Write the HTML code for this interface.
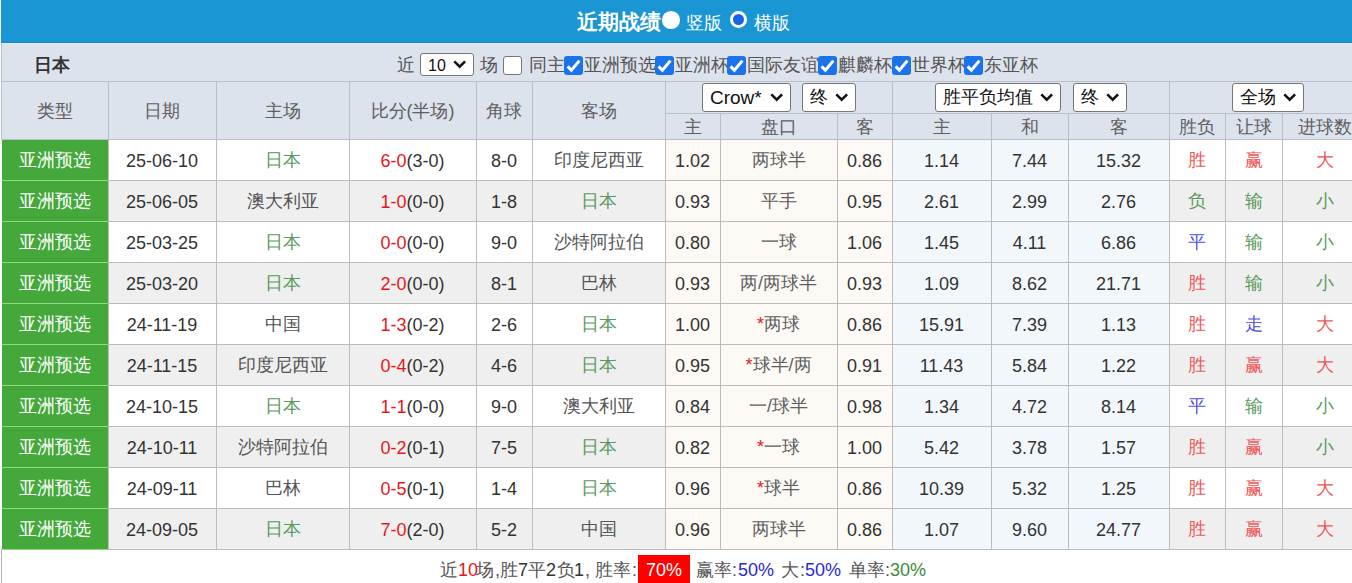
<!DOCTYPE html>
<html><head><meta charset="utf-8"><style>
html,body{margin:0;padding:0;background:#fff;width:1352px;height:583px;overflow:hidden;position:relative;font-family:"Liberation Sans",sans-serif;}
.b{position:absolute;box-sizing:content-box}
.t{position:absolute;text-align:center;font-size:18px;color:#333;white-space:nowrap;overflow:hidden}
.tt{position:absolute;white-space:nowrap}
.sel{position:absolute;background:#fff;border:1px solid #767676;border-radius:3px;color:#111}
.cb{position:absolute;width:16px;height:16px;border:1px solid #767676;border-radius:3px;background:#fff;box-sizing:border-box;width:19px;height:19px}
.cb.on{background:#1a73e8;border:none}
.cb svg{position:absolute;left:0;top:0}
</style></head><body>
<div class="b" style="left:1px;top:0px;width:1351px;height:43px;background:#1a96d4;"></div>
<div class="b" style="left:1px;top:42px;width:1351px;height:1px;background:#1c86c2;"></div>
<div class="b" style="left:1px;top:43px;width:1351px;height:1px;background:#d4eefb;"></div>
<div class="b" style="left:1px;top:44px;width:1351px;height:95px;background:#dde3ec;"></div>
<div class="b" style="left:1px;top:81px;width:1351px;height:1px;background:#b9bfc7;"></div>
<div class="b" style="left:1px;top:44px;width:1px;height:95px;background:#b9bfc7;"></div>
<div class="b" style="left:108px;top:82px;width:1px;height:57px;background:#b9bfc7;"></div>
<div class="b" style="left:216px;top:82px;width:1px;height:57px;background:#b9bfc7;"></div>
<div class="b" style="left:349px;top:82px;width:1px;height:57px;background:#b9bfc7;"></div>
<div class="b" style="left:476px;top:82px;width:1px;height:57px;background:#b9bfc7;"></div>
<div class="b" style="left:532px;top:82px;width:1px;height:57px;background:#b9bfc7;"></div>
<div class="b" style="left:665px;top:82px;width:1px;height:57px;background:#b9bfc7;"></div>
<div class="b" style="left:892px;top:82px;width:1px;height:57px;background:#b9bfc7;"></div>
<div class="b" style="left:1169px;top:82px;width:1px;height:57px;background:#b9bfc7;"></div>
<div class="b" style="left:720px;top:113px;width:1px;height:26px;background:#b9bfc7;"></div>
<div class="b" style="left:837px;top:113px;width:1px;height:26px;background:#b9bfc7;"></div>
<div class="b" style="left:991px;top:113px;width:1px;height:26px;background:#b9bfc7;"></div>
<div class="b" style="left:1068px;top:113px;width:1px;height:26px;background:#b9bfc7;"></div>
<div class="b" style="left:1225px;top:113px;width:1px;height:26px;background:#b9bfc7;"></div>
<div class="b" style="left:1282px;top:113px;width:1px;height:26px;background:#b9bfc7;"></div>
<div class="b" style="left:665px;top:113px;width:687px;height:1px;background:#b9bfc7;"></div>
<div class="b" style="left:1px;top:139px;width:1351px;height:1px;background:#b9bfc7;"></div>
<div class="b" style="left:2px;top:140px;width:1350px;height:40px;background:#fff;"></div>
<div class="b" style="left:666px;top:140px;width:226px;height:40px;background:#fdf9f5;"></div>
<div class="b" style="left:893px;top:140px;width:276px;height:40px;background:#f2f7fb;"></div>
<div class="b" style="left:2px;top:140px;width:106px;height:40px;background:#44a83b;"></div>
<div class="b" style="left:1px;top:180px;width:1351px;height:1px;background:#bcbcbc;"></div>
<div class="b" style="left:2px;top:180px;width:106px;height:1px;background:#8ddc7f;"></div>
<div class="b" style="left:2px;top:181px;width:1350px;height:40px;background:#efefef;"></div>
<div class="b" style="left:666px;top:181px;width:226px;height:40px;background:#fdf9f5;"></div>
<div class="b" style="left:893px;top:181px;width:276px;height:40px;background:#f2f7fb;"></div>
<div class="b" style="left:2px;top:181px;width:106px;height:40px;background:#44a83b;"></div>
<div class="b" style="left:1px;top:221px;width:1351px;height:1px;background:#bcbcbc;"></div>
<div class="b" style="left:2px;top:221px;width:106px;height:1px;background:#8ddc7f;"></div>
<div class="b" style="left:2px;top:222px;width:1350px;height:40px;background:#fff;"></div>
<div class="b" style="left:666px;top:222px;width:226px;height:40px;background:#fdf9f5;"></div>
<div class="b" style="left:893px;top:222px;width:276px;height:40px;background:#f2f7fb;"></div>
<div class="b" style="left:2px;top:222px;width:106px;height:40px;background:#44a83b;"></div>
<div class="b" style="left:1px;top:262px;width:1351px;height:1px;background:#bcbcbc;"></div>
<div class="b" style="left:2px;top:262px;width:106px;height:1px;background:#8ddc7f;"></div>
<div class="b" style="left:2px;top:263px;width:1350px;height:40px;background:#efefef;"></div>
<div class="b" style="left:666px;top:263px;width:226px;height:40px;background:#fdf9f5;"></div>
<div class="b" style="left:893px;top:263px;width:276px;height:40px;background:#f2f7fb;"></div>
<div class="b" style="left:2px;top:263px;width:106px;height:40px;background:#44a83b;"></div>
<div class="b" style="left:1px;top:303px;width:1351px;height:1px;background:#bcbcbc;"></div>
<div class="b" style="left:2px;top:303px;width:106px;height:1px;background:#8ddc7f;"></div>
<div class="b" style="left:2px;top:304px;width:1350px;height:40px;background:#fff;"></div>
<div class="b" style="left:666px;top:304px;width:226px;height:40px;background:#fdf9f5;"></div>
<div class="b" style="left:893px;top:304px;width:276px;height:40px;background:#f2f7fb;"></div>
<div class="b" style="left:2px;top:304px;width:106px;height:40px;background:#44a83b;"></div>
<div class="b" style="left:1px;top:344px;width:1351px;height:1px;background:#bcbcbc;"></div>
<div class="b" style="left:2px;top:344px;width:106px;height:1px;background:#8ddc7f;"></div>
<div class="b" style="left:2px;top:345px;width:1350px;height:40px;background:#efefef;"></div>
<div class="b" style="left:666px;top:345px;width:226px;height:40px;background:#fdf9f5;"></div>
<div class="b" style="left:893px;top:345px;width:276px;height:40px;background:#f2f7fb;"></div>
<div class="b" style="left:2px;top:345px;width:106px;height:40px;background:#44a83b;"></div>
<div class="b" style="left:1px;top:385px;width:1351px;height:1px;background:#bcbcbc;"></div>
<div class="b" style="left:2px;top:385px;width:106px;height:1px;background:#8ddc7f;"></div>
<div class="b" style="left:2px;top:386px;width:1350px;height:40px;background:#fff;"></div>
<div class="b" style="left:666px;top:386px;width:226px;height:40px;background:#fdf9f5;"></div>
<div class="b" style="left:893px;top:386px;width:276px;height:40px;background:#f2f7fb;"></div>
<div class="b" style="left:2px;top:386px;width:106px;height:40px;background:#44a83b;"></div>
<div class="b" style="left:1px;top:426px;width:1351px;height:1px;background:#bcbcbc;"></div>
<div class="b" style="left:2px;top:426px;width:106px;height:1px;background:#8ddc7f;"></div>
<div class="b" style="left:2px;top:427px;width:1350px;height:40px;background:#efefef;"></div>
<div class="b" style="left:666px;top:427px;width:226px;height:40px;background:#fdf9f5;"></div>
<div class="b" style="left:893px;top:427px;width:276px;height:40px;background:#f2f7fb;"></div>
<div class="b" style="left:2px;top:427px;width:106px;height:40px;background:#44a83b;"></div>
<div class="b" style="left:1px;top:467px;width:1351px;height:1px;background:#bcbcbc;"></div>
<div class="b" style="left:2px;top:467px;width:106px;height:1px;background:#8ddc7f;"></div>
<div class="b" style="left:2px;top:468px;width:1350px;height:40px;background:#fff;"></div>
<div class="b" style="left:666px;top:468px;width:226px;height:40px;background:#fdf9f5;"></div>
<div class="b" style="left:893px;top:468px;width:276px;height:40px;background:#f2f7fb;"></div>
<div class="b" style="left:2px;top:468px;width:106px;height:40px;background:#44a83b;"></div>
<div class="b" style="left:1px;top:508px;width:1351px;height:1px;background:#bcbcbc;"></div>
<div class="b" style="left:2px;top:508px;width:106px;height:1px;background:#8ddc7f;"></div>
<div class="b" style="left:2px;top:509px;width:1350px;height:40px;background:#efefef;"></div>
<div class="b" style="left:666px;top:509px;width:226px;height:40px;background:#fdf9f5;"></div>
<div class="b" style="left:893px;top:509px;width:276px;height:40px;background:#f2f7fb;"></div>
<div class="b" style="left:2px;top:509px;width:106px;height:40px;background:#44a83b;"></div>
<div class="b" style="left:1px;top:549px;width:1351px;height:1px;background:#bcbcbc;"></div>
<div class="b" style="left:2px;top:549px;width:106px;height:1px;background:#8ddc7f;"></div>
<div class="b" style="left:108px;top:140px;width:1px;height:40px;background:#bcbcbc;"></div>
<div class="b" style="left:216px;top:140px;width:1px;height:40px;background:#bcbcbc;"></div>
<div class="b" style="left:349px;top:140px;width:1px;height:40px;background:#bcbcbc;"></div>
<div class="b" style="left:476px;top:140px;width:1px;height:40px;background:#bcbcbc;"></div>
<div class="b" style="left:532px;top:140px;width:1px;height:40px;background:#bcbcbc;"></div>
<div class="b" style="left:665px;top:140px;width:1px;height:40px;background:#bcbcbc;"></div>
<div class="b" style="left:720px;top:140px;width:1px;height:40px;background:#bcbcbc;"></div>
<div class="b" style="left:837px;top:140px;width:1px;height:40px;background:#bcbcbc;"></div>
<div class="b" style="left:892px;top:140px;width:1px;height:40px;background:#bcbcbc;"></div>
<div class="b" style="left:991px;top:140px;width:1px;height:40px;background:#bcbcbc;"></div>
<div class="b" style="left:1068px;top:140px;width:1px;height:40px;background:#bcbcbc;"></div>
<div class="b" style="left:1169px;top:140px;width:1px;height:40px;background:#bcbcbc;"></div>
<div class="b" style="left:1225px;top:140px;width:1px;height:40px;background:#bcbcbc;"></div>
<div class="b" style="left:1282px;top:140px;width:1px;height:40px;background:#bcbcbc;"></div>
<div class="b" style="left:108px;top:181px;width:1px;height:40px;background:#bcbcbc;"></div>
<div class="b" style="left:216px;top:181px;width:1px;height:40px;background:#bcbcbc;"></div>
<div class="b" style="left:349px;top:181px;width:1px;height:40px;background:#bcbcbc;"></div>
<div class="b" style="left:476px;top:181px;width:1px;height:40px;background:#bcbcbc;"></div>
<div class="b" style="left:532px;top:181px;width:1px;height:40px;background:#bcbcbc;"></div>
<div class="b" style="left:665px;top:181px;width:1px;height:40px;background:#bcbcbc;"></div>
<div class="b" style="left:720px;top:181px;width:1px;height:40px;background:#bcbcbc;"></div>
<div class="b" style="left:837px;top:181px;width:1px;height:40px;background:#bcbcbc;"></div>
<div class="b" style="left:892px;top:181px;width:1px;height:40px;background:#bcbcbc;"></div>
<div class="b" style="left:991px;top:181px;width:1px;height:40px;background:#bcbcbc;"></div>
<div class="b" style="left:1068px;top:181px;width:1px;height:40px;background:#bcbcbc;"></div>
<div class="b" style="left:1169px;top:181px;width:1px;height:40px;background:#bcbcbc;"></div>
<div class="b" style="left:1225px;top:181px;width:1px;height:40px;background:#bcbcbc;"></div>
<div class="b" style="left:1282px;top:181px;width:1px;height:40px;background:#bcbcbc;"></div>
<div class="b" style="left:108px;top:222px;width:1px;height:40px;background:#bcbcbc;"></div>
<div class="b" style="left:216px;top:222px;width:1px;height:40px;background:#bcbcbc;"></div>
<div class="b" style="left:349px;top:222px;width:1px;height:40px;background:#bcbcbc;"></div>
<div class="b" style="left:476px;top:222px;width:1px;height:40px;background:#bcbcbc;"></div>
<div class="b" style="left:532px;top:222px;width:1px;height:40px;background:#bcbcbc;"></div>
<div class="b" style="left:665px;top:222px;width:1px;height:40px;background:#bcbcbc;"></div>
<div class="b" style="left:720px;top:222px;width:1px;height:40px;background:#bcbcbc;"></div>
<div class="b" style="left:837px;top:222px;width:1px;height:40px;background:#bcbcbc;"></div>
<div class="b" style="left:892px;top:222px;width:1px;height:40px;background:#bcbcbc;"></div>
<div class="b" style="left:991px;top:222px;width:1px;height:40px;background:#bcbcbc;"></div>
<div class="b" style="left:1068px;top:222px;width:1px;height:40px;background:#bcbcbc;"></div>
<div class="b" style="left:1169px;top:222px;width:1px;height:40px;background:#bcbcbc;"></div>
<div class="b" style="left:1225px;top:222px;width:1px;height:40px;background:#bcbcbc;"></div>
<div class="b" style="left:1282px;top:222px;width:1px;height:40px;background:#bcbcbc;"></div>
<div class="b" style="left:108px;top:263px;width:1px;height:40px;background:#bcbcbc;"></div>
<div class="b" style="left:216px;top:263px;width:1px;height:40px;background:#bcbcbc;"></div>
<div class="b" style="left:349px;top:263px;width:1px;height:40px;background:#bcbcbc;"></div>
<div class="b" style="left:476px;top:263px;width:1px;height:40px;background:#bcbcbc;"></div>
<div class="b" style="left:532px;top:263px;width:1px;height:40px;background:#bcbcbc;"></div>
<div class="b" style="left:665px;top:263px;width:1px;height:40px;background:#bcbcbc;"></div>
<div class="b" style="left:720px;top:263px;width:1px;height:40px;background:#bcbcbc;"></div>
<div class="b" style="left:837px;top:263px;width:1px;height:40px;background:#bcbcbc;"></div>
<div class="b" style="left:892px;top:263px;width:1px;height:40px;background:#bcbcbc;"></div>
<div class="b" style="left:991px;top:263px;width:1px;height:40px;background:#bcbcbc;"></div>
<div class="b" style="left:1068px;top:263px;width:1px;height:40px;background:#bcbcbc;"></div>
<div class="b" style="left:1169px;top:263px;width:1px;height:40px;background:#bcbcbc;"></div>
<div class="b" style="left:1225px;top:263px;width:1px;height:40px;background:#bcbcbc;"></div>
<div class="b" style="left:1282px;top:263px;width:1px;height:40px;background:#bcbcbc;"></div>
<div class="b" style="left:108px;top:304px;width:1px;height:40px;background:#bcbcbc;"></div>
<div class="b" style="left:216px;top:304px;width:1px;height:40px;background:#bcbcbc;"></div>
<div class="b" style="left:349px;top:304px;width:1px;height:40px;background:#bcbcbc;"></div>
<div class="b" style="left:476px;top:304px;width:1px;height:40px;background:#bcbcbc;"></div>
<div class="b" style="left:532px;top:304px;width:1px;height:40px;background:#bcbcbc;"></div>
<div class="b" style="left:665px;top:304px;width:1px;height:40px;background:#bcbcbc;"></div>
<div class="b" style="left:720px;top:304px;width:1px;height:40px;background:#bcbcbc;"></div>
<div class="b" style="left:837px;top:304px;width:1px;height:40px;background:#bcbcbc;"></div>
<div class="b" style="left:892px;top:304px;width:1px;height:40px;background:#bcbcbc;"></div>
<div class="b" style="left:991px;top:304px;width:1px;height:40px;background:#bcbcbc;"></div>
<div class="b" style="left:1068px;top:304px;width:1px;height:40px;background:#bcbcbc;"></div>
<div class="b" style="left:1169px;top:304px;width:1px;height:40px;background:#bcbcbc;"></div>
<div class="b" style="left:1225px;top:304px;width:1px;height:40px;background:#bcbcbc;"></div>
<div class="b" style="left:1282px;top:304px;width:1px;height:40px;background:#bcbcbc;"></div>
<div class="b" style="left:108px;top:345px;width:1px;height:40px;background:#bcbcbc;"></div>
<div class="b" style="left:216px;top:345px;width:1px;height:40px;background:#bcbcbc;"></div>
<div class="b" style="left:349px;top:345px;width:1px;height:40px;background:#bcbcbc;"></div>
<div class="b" style="left:476px;top:345px;width:1px;height:40px;background:#bcbcbc;"></div>
<div class="b" style="left:532px;top:345px;width:1px;height:40px;background:#bcbcbc;"></div>
<div class="b" style="left:665px;top:345px;width:1px;height:40px;background:#bcbcbc;"></div>
<div class="b" style="left:720px;top:345px;width:1px;height:40px;background:#bcbcbc;"></div>
<div class="b" style="left:837px;top:345px;width:1px;height:40px;background:#bcbcbc;"></div>
<div class="b" style="left:892px;top:345px;width:1px;height:40px;background:#bcbcbc;"></div>
<div class="b" style="left:991px;top:345px;width:1px;height:40px;background:#bcbcbc;"></div>
<div class="b" style="left:1068px;top:345px;width:1px;height:40px;background:#bcbcbc;"></div>
<div class="b" style="left:1169px;top:345px;width:1px;height:40px;background:#bcbcbc;"></div>
<div class="b" style="left:1225px;top:345px;width:1px;height:40px;background:#bcbcbc;"></div>
<div class="b" style="left:1282px;top:345px;width:1px;height:40px;background:#bcbcbc;"></div>
<div class="b" style="left:108px;top:386px;width:1px;height:40px;background:#bcbcbc;"></div>
<div class="b" style="left:216px;top:386px;width:1px;height:40px;background:#bcbcbc;"></div>
<div class="b" style="left:349px;top:386px;width:1px;height:40px;background:#bcbcbc;"></div>
<div class="b" style="left:476px;top:386px;width:1px;height:40px;background:#bcbcbc;"></div>
<div class="b" style="left:532px;top:386px;width:1px;height:40px;background:#bcbcbc;"></div>
<div class="b" style="left:665px;top:386px;width:1px;height:40px;background:#bcbcbc;"></div>
<div class="b" style="left:720px;top:386px;width:1px;height:40px;background:#bcbcbc;"></div>
<div class="b" style="left:837px;top:386px;width:1px;height:40px;background:#bcbcbc;"></div>
<div class="b" style="left:892px;top:386px;width:1px;height:40px;background:#bcbcbc;"></div>
<div class="b" style="left:991px;top:386px;width:1px;height:40px;background:#bcbcbc;"></div>
<div class="b" style="left:1068px;top:386px;width:1px;height:40px;background:#bcbcbc;"></div>
<div class="b" style="left:1169px;top:386px;width:1px;height:40px;background:#bcbcbc;"></div>
<div class="b" style="left:1225px;top:386px;width:1px;height:40px;background:#bcbcbc;"></div>
<div class="b" style="left:1282px;top:386px;width:1px;height:40px;background:#bcbcbc;"></div>
<div class="b" style="left:108px;top:427px;width:1px;height:40px;background:#bcbcbc;"></div>
<div class="b" style="left:216px;top:427px;width:1px;height:40px;background:#bcbcbc;"></div>
<div class="b" style="left:349px;top:427px;width:1px;height:40px;background:#bcbcbc;"></div>
<div class="b" style="left:476px;top:427px;width:1px;height:40px;background:#bcbcbc;"></div>
<div class="b" style="left:532px;top:427px;width:1px;height:40px;background:#bcbcbc;"></div>
<div class="b" style="left:665px;top:427px;width:1px;height:40px;background:#bcbcbc;"></div>
<div class="b" style="left:720px;top:427px;width:1px;height:40px;background:#bcbcbc;"></div>
<div class="b" style="left:837px;top:427px;width:1px;height:40px;background:#bcbcbc;"></div>
<div class="b" style="left:892px;top:427px;width:1px;height:40px;background:#bcbcbc;"></div>
<div class="b" style="left:991px;top:427px;width:1px;height:40px;background:#bcbcbc;"></div>
<div class="b" style="left:1068px;top:427px;width:1px;height:40px;background:#bcbcbc;"></div>
<div class="b" style="left:1169px;top:427px;width:1px;height:40px;background:#bcbcbc;"></div>
<div class="b" style="left:1225px;top:427px;width:1px;height:40px;background:#bcbcbc;"></div>
<div class="b" style="left:1282px;top:427px;width:1px;height:40px;background:#bcbcbc;"></div>
<div class="b" style="left:108px;top:468px;width:1px;height:40px;background:#bcbcbc;"></div>
<div class="b" style="left:216px;top:468px;width:1px;height:40px;background:#bcbcbc;"></div>
<div class="b" style="left:349px;top:468px;width:1px;height:40px;background:#bcbcbc;"></div>
<div class="b" style="left:476px;top:468px;width:1px;height:40px;background:#bcbcbc;"></div>
<div class="b" style="left:532px;top:468px;width:1px;height:40px;background:#bcbcbc;"></div>
<div class="b" style="left:665px;top:468px;width:1px;height:40px;background:#bcbcbc;"></div>
<div class="b" style="left:720px;top:468px;width:1px;height:40px;background:#bcbcbc;"></div>
<div class="b" style="left:837px;top:468px;width:1px;height:40px;background:#bcbcbc;"></div>
<div class="b" style="left:892px;top:468px;width:1px;height:40px;background:#bcbcbc;"></div>
<div class="b" style="left:991px;top:468px;width:1px;height:40px;background:#bcbcbc;"></div>
<div class="b" style="left:1068px;top:468px;width:1px;height:40px;background:#bcbcbc;"></div>
<div class="b" style="left:1169px;top:468px;width:1px;height:40px;background:#bcbcbc;"></div>
<div class="b" style="left:1225px;top:468px;width:1px;height:40px;background:#bcbcbc;"></div>
<div class="b" style="left:1282px;top:468px;width:1px;height:40px;background:#bcbcbc;"></div>
<div class="b" style="left:108px;top:509px;width:1px;height:40px;background:#bcbcbc;"></div>
<div class="b" style="left:216px;top:509px;width:1px;height:40px;background:#bcbcbc;"></div>
<div class="b" style="left:349px;top:509px;width:1px;height:40px;background:#bcbcbc;"></div>
<div class="b" style="left:476px;top:509px;width:1px;height:40px;background:#bcbcbc;"></div>
<div class="b" style="left:532px;top:509px;width:1px;height:40px;background:#bcbcbc;"></div>
<div class="b" style="left:665px;top:509px;width:1px;height:40px;background:#bcbcbc;"></div>
<div class="b" style="left:720px;top:509px;width:1px;height:40px;background:#bcbcbc;"></div>
<div class="b" style="left:837px;top:509px;width:1px;height:40px;background:#bcbcbc;"></div>
<div class="b" style="left:892px;top:509px;width:1px;height:40px;background:#bcbcbc;"></div>
<div class="b" style="left:991px;top:509px;width:1px;height:40px;background:#bcbcbc;"></div>
<div class="b" style="left:1068px;top:509px;width:1px;height:40px;background:#bcbcbc;"></div>
<div class="b" style="left:1169px;top:509px;width:1px;height:40px;background:#bcbcbc;"></div>
<div class="b" style="left:1225px;top:509px;width:1px;height:40px;background:#bcbcbc;"></div>
<div class="b" style="left:1282px;top:509px;width:1px;height:40px;background:#bcbcbc;"></div>
<div class="b" style="left:1px;top:140px;width:1px;height:409px;background:#fafafa;"></div>
<div class="b" style="left:1px;top:549px;width:1px;height:34px;background:#b0b0b0;"></div>
<div class="t" style="left:2px;top:140px;width:106px;height:40px;line-height:40px;color:#fff">亚洲预选</div>
<div class="t" style="left:108px;top:141px;width:108px;height:40px;line-height:40px;">25-06-10</div>
<div class="t" style="left:216px;top:140px;width:133px;height:40px;line-height:40px;color:#5a9a60">日本</div>
<div class="t" style="left:349px;top:141px;width:127px;height:40px;line-height:40px;"><span style="color:#e8161c">6-0</span>(3-0)</div>
<div class="t" style="left:476px;top:141px;width:56px;height:40px;line-height:40px;">8-0</div>
<div class="t" style="left:532px;top:140px;width:133px;height:40px;line-height:40px;color:#555">印度尼西亚</div>
<div class="t" style="left:665px;top:141px;width:55px;height:40px;line-height:40px;">1.02</div>
<div class="t" style="left:720px;top:140px;width:117px;height:40px;line-height:40px;color:#606060">两球半</div>
<div class="t" style="left:837px;top:141px;width:55px;height:40px;line-height:40px;">0.86</div>
<div class="t" style="left:892px;top:141px;width:99px;height:40px;line-height:40px;">1.14</div>
<div class="t" style="left:991px;top:141px;width:77px;height:40px;line-height:40px;">7.44</div>
<div class="t" style="left:1068px;top:141px;width:101px;height:40px;line-height:40px;">15.32</div>
<div class="t" style="left:1169px;top:140px;width:56px;height:40px;line-height:40px;color:#f05555">胜</div>
<div class="t" style="left:1225px;top:140px;width:57px;height:40px;line-height:40px;color:#f05555">赢</div>
<div class="t" style="left:1282px;top:140px;width:85px;height:40px;line-height:40px;color:#f05555">大</div>
<div class="t" style="left:2px;top:181px;width:106px;height:40px;line-height:40px;color:#fff">亚洲预选</div>
<div class="t" style="left:108px;top:182px;width:108px;height:40px;line-height:40px;">25-06-05</div>
<div class="t" style="left:216px;top:181px;width:133px;height:40px;line-height:40px;color:#555">澳大利亚</div>
<div class="t" style="left:349px;top:182px;width:127px;height:40px;line-height:40px;"><span style="color:#e8161c">1-0</span>(0-0)</div>
<div class="t" style="left:476px;top:182px;width:56px;height:40px;line-height:40px;">1-8</div>
<div class="t" style="left:532px;top:181px;width:133px;height:40px;line-height:40px;color:#5a9a60">日本</div>
<div class="t" style="left:665px;top:182px;width:55px;height:40px;line-height:40px;">0.93</div>
<div class="t" style="left:720px;top:181px;width:117px;height:40px;line-height:40px;color:#606060">平手</div>
<div class="t" style="left:837px;top:182px;width:55px;height:40px;line-height:40px;">0.95</div>
<div class="t" style="left:892px;top:182px;width:99px;height:40px;line-height:40px;">2.61</div>
<div class="t" style="left:991px;top:182px;width:77px;height:40px;line-height:40px;">2.99</div>
<div class="t" style="left:1068px;top:182px;width:101px;height:40px;line-height:40px;">2.76</div>
<div class="t" style="left:1169px;top:181px;width:56px;height:40px;line-height:40px;color:#5a9a60">负</div>
<div class="t" style="left:1225px;top:181px;width:57px;height:40px;line-height:40px;color:#5a9a60">输</div>
<div class="t" style="left:1282px;top:181px;width:85px;height:40px;line-height:40px;color:#5a9a60">小</div>
<div class="t" style="left:2px;top:222px;width:106px;height:40px;line-height:40px;color:#fff">亚洲预选</div>
<div class="t" style="left:108px;top:223px;width:108px;height:40px;line-height:40px;">25-03-25</div>
<div class="t" style="left:216px;top:222px;width:133px;height:40px;line-height:40px;color:#5a9a60">日本</div>
<div class="t" style="left:349px;top:223px;width:127px;height:40px;line-height:40px;"><span style="color:#e8161c">0-0</span>(0-0)</div>
<div class="t" style="left:476px;top:223px;width:56px;height:40px;line-height:40px;">9-0</div>
<div class="t" style="left:532px;top:222px;width:133px;height:40px;line-height:40px;color:#555">沙特阿拉伯</div>
<div class="t" style="left:665px;top:223px;width:55px;height:40px;line-height:40px;">0.80</div>
<div class="t" style="left:720px;top:222px;width:117px;height:40px;line-height:40px;color:#606060">一球</div>
<div class="t" style="left:837px;top:223px;width:55px;height:40px;line-height:40px;">1.06</div>
<div class="t" style="left:892px;top:223px;width:99px;height:40px;line-height:40px;">1.45</div>
<div class="t" style="left:991px;top:223px;width:77px;height:40px;line-height:40px;">4.11</div>
<div class="t" style="left:1068px;top:223px;width:101px;height:40px;line-height:40px;">6.86</div>
<div class="t" style="left:1169px;top:222px;width:56px;height:40px;line-height:40px;color:#5050e0">平</div>
<div class="t" style="left:1225px;top:222px;width:57px;height:40px;line-height:40px;color:#5a9a60">输</div>
<div class="t" style="left:1282px;top:222px;width:85px;height:40px;line-height:40px;color:#5a9a60">小</div>
<div class="t" style="left:2px;top:263px;width:106px;height:40px;line-height:40px;color:#fff">亚洲预选</div>
<div class="t" style="left:108px;top:264px;width:108px;height:40px;line-height:40px;">25-03-20</div>
<div class="t" style="left:216px;top:263px;width:133px;height:40px;line-height:40px;color:#5a9a60">日本</div>
<div class="t" style="left:349px;top:264px;width:127px;height:40px;line-height:40px;"><span style="color:#e8161c">2-0</span>(0-0)</div>
<div class="t" style="left:476px;top:264px;width:56px;height:40px;line-height:40px;">8-1</div>
<div class="t" style="left:532px;top:263px;width:133px;height:40px;line-height:40px;color:#555">巴林</div>
<div class="t" style="left:665px;top:264px;width:55px;height:40px;line-height:40px;">0.93</div>
<div class="t" style="left:720px;top:263px;width:117px;height:40px;line-height:40px;color:#606060">两/两球半</div>
<div class="t" style="left:837px;top:264px;width:55px;height:40px;line-height:40px;">0.93</div>
<div class="t" style="left:892px;top:264px;width:99px;height:40px;line-height:40px;">1.09</div>
<div class="t" style="left:991px;top:264px;width:77px;height:40px;line-height:40px;">8.62</div>
<div class="t" style="left:1068px;top:264px;width:101px;height:40px;line-height:40px;">21.71</div>
<div class="t" style="left:1169px;top:263px;width:56px;height:40px;line-height:40px;color:#f05555">胜</div>
<div class="t" style="left:1225px;top:263px;width:57px;height:40px;line-height:40px;color:#5a9a60">输</div>
<div class="t" style="left:1282px;top:263px;width:85px;height:40px;line-height:40px;color:#5a9a60">小</div>
<div class="t" style="left:2px;top:304px;width:106px;height:40px;line-height:40px;color:#fff">亚洲预选</div>
<div class="t" style="left:108px;top:305px;width:108px;height:40px;line-height:40px;">24-11-19</div>
<div class="t" style="left:216px;top:304px;width:133px;height:40px;line-height:40px;color:#555">中国</div>
<div class="t" style="left:349px;top:305px;width:127px;height:40px;line-height:40px;"><span style="color:#e8161c">1-3</span>(0-2)</div>
<div class="t" style="left:476px;top:305px;width:56px;height:40px;line-height:40px;">2-6</div>
<div class="t" style="left:532px;top:304px;width:133px;height:40px;line-height:40px;color:#5a9a60">日本</div>
<div class="t" style="left:665px;top:305px;width:55px;height:40px;line-height:40px;">1.00</div>
<div class="t" style="left:720px;top:304px;width:117px;height:40px;line-height:40px;color:#606060"><span style="color:#e8161c">*</span>两球</div>
<div class="t" style="left:837px;top:305px;width:55px;height:40px;line-height:40px;">0.86</div>
<div class="t" style="left:892px;top:305px;width:99px;height:40px;line-height:40px;">15.91</div>
<div class="t" style="left:991px;top:305px;width:77px;height:40px;line-height:40px;">7.39</div>
<div class="t" style="left:1068px;top:305px;width:101px;height:40px;line-height:40px;">1.13</div>
<div class="t" style="left:1169px;top:304px;width:56px;height:40px;line-height:40px;color:#f05555">胜</div>
<div class="t" style="left:1225px;top:304px;width:57px;height:40px;line-height:40px;color:#5050e0">走</div>
<div class="t" style="left:1282px;top:304px;width:85px;height:40px;line-height:40px;color:#f05555">大</div>
<div class="t" style="left:2px;top:345px;width:106px;height:40px;line-height:40px;color:#fff">亚洲预选</div>
<div class="t" style="left:108px;top:346px;width:108px;height:40px;line-height:40px;">24-11-15</div>
<div class="t" style="left:216px;top:345px;width:133px;height:40px;line-height:40px;color:#555">印度尼西亚</div>
<div class="t" style="left:349px;top:346px;width:127px;height:40px;line-height:40px;"><span style="color:#e8161c">0-4</span>(0-2)</div>
<div class="t" style="left:476px;top:346px;width:56px;height:40px;line-height:40px;">4-6</div>
<div class="t" style="left:532px;top:345px;width:133px;height:40px;line-height:40px;color:#5a9a60">日本</div>
<div class="t" style="left:665px;top:346px;width:55px;height:40px;line-height:40px;">0.95</div>
<div class="t" style="left:720px;top:345px;width:117px;height:40px;line-height:40px;color:#606060"><span style="color:#e8161c">*</span>球半/两</div>
<div class="t" style="left:837px;top:346px;width:55px;height:40px;line-height:40px;">0.91</div>
<div class="t" style="left:892px;top:346px;width:99px;height:40px;line-height:40px;">11.43</div>
<div class="t" style="left:991px;top:346px;width:77px;height:40px;line-height:40px;">5.84</div>
<div class="t" style="left:1068px;top:346px;width:101px;height:40px;line-height:40px;">1.22</div>
<div class="t" style="left:1169px;top:345px;width:56px;height:40px;line-height:40px;color:#f05555">胜</div>
<div class="t" style="left:1225px;top:345px;width:57px;height:40px;line-height:40px;color:#f05555">赢</div>
<div class="t" style="left:1282px;top:345px;width:85px;height:40px;line-height:40px;color:#f05555">大</div>
<div class="t" style="left:2px;top:386px;width:106px;height:40px;line-height:40px;color:#fff">亚洲预选</div>
<div class="t" style="left:108px;top:387px;width:108px;height:40px;line-height:40px;">24-10-15</div>
<div class="t" style="left:216px;top:386px;width:133px;height:40px;line-height:40px;color:#5a9a60">日本</div>
<div class="t" style="left:349px;top:387px;width:127px;height:40px;line-height:40px;"><span style="color:#e8161c">1-1</span>(0-0)</div>
<div class="t" style="left:476px;top:387px;width:56px;height:40px;line-height:40px;">9-0</div>
<div class="t" style="left:532px;top:386px;width:133px;height:40px;line-height:40px;color:#555">澳大利亚</div>
<div class="t" style="left:665px;top:387px;width:55px;height:40px;line-height:40px;">0.84</div>
<div class="t" style="left:720px;top:386px;width:117px;height:40px;line-height:40px;color:#606060">一/球半</div>
<div class="t" style="left:837px;top:387px;width:55px;height:40px;line-height:40px;">0.98</div>
<div class="t" style="left:892px;top:387px;width:99px;height:40px;line-height:40px;">1.34</div>
<div class="t" style="left:991px;top:387px;width:77px;height:40px;line-height:40px;">4.72</div>
<div class="t" style="left:1068px;top:387px;width:101px;height:40px;line-height:40px;">8.14</div>
<div class="t" style="left:1169px;top:386px;width:56px;height:40px;line-height:40px;color:#5050e0">平</div>
<div class="t" style="left:1225px;top:386px;width:57px;height:40px;line-height:40px;color:#5a9a60">输</div>
<div class="t" style="left:1282px;top:386px;width:85px;height:40px;line-height:40px;color:#5a9a60">小</div>
<div class="t" style="left:2px;top:427px;width:106px;height:40px;line-height:40px;color:#fff">亚洲预选</div>
<div class="t" style="left:108px;top:428px;width:108px;height:40px;line-height:40px;">24-10-11</div>
<div class="t" style="left:216px;top:427px;width:133px;height:40px;line-height:40px;color:#555">沙特阿拉伯</div>
<div class="t" style="left:349px;top:428px;width:127px;height:40px;line-height:40px;"><span style="color:#e8161c">0-2</span>(0-1)</div>
<div class="t" style="left:476px;top:428px;width:56px;height:40px;line-height:40px;">7-5</div>
<div class="t" style="left:532px;top:427px;width:133px;height:40px;line-height:40px;color:#5a9a60">日本</div>
<div class="t" style="left:665px;top:428px;width:55px;height:40px;line-height:40px;">0.82</div>
<div class="t" style="left:720px;top:427px;width:117px;height:40px;line-height:40px;color:#606060"><span style="color:#e8161c">*</span>一球</div>
<div class="t" style="left:837px;top:428px;width:55px;height:40px;line-height:40px;">1.00</div>
<div class="t" style="left:892px;top:428px;width:99px;height:40px;line-height:40px;">5.42</div>
<div class="t" style="left:991px;top:428px;width:77px;height:40px;line-height:40px;">3.78</div>
<div class="t" style="left:1068px;top:428px;width:101px;height:40px;line-height:40px;">1.57</div>
<div class="t" style="left:1169px;top:427px;width:56px;height:40px;line-height:40px;color:#f05555">胜</div>
<div class="t" style="left:1225px;top:427px;width:57px;height:40px;line-height:40px;color:#f05555">赢</div>
<div class="t" style="left:1282px;top:427px;width:85px;height:40px;line-height:40px;color:#5a9a60">小</div>
<div class="t" style="left:2px;top:468px;width:106px;height:40px;line-height:40px;color:#fff">亚洲预选</div>
<div class="t" style="left:108px;top:469px;width:108px;height:40px;line-height:40px;">24-09-11</div>
<div class="t" style="left:216px;top:468px;width:133px;height:40px;line-height:40px;color:#555">巴林</div>
<div class="t" style="left:349px;top:469px;width:127px;height:40px;line-height:40px;"><span style="color:#e8161c">0-5</span>(0-1)</div>
<div class="t" style="left:476px;top:469px;width:56px;height:40px;line-height:40px;">1-4</div>
<div class="t" style="left:532px;top:468px;width:133px;height:40px;line-height:40px;color:#5a9a60">日本</div>
<div class="t" style="left:665px;top:469px;width:55px;height:40px;line-height:40px;">0.96</div>
<div class="t" style="left:720px;top:468px;width:117px;height:40px;line-height:40px;color:#606060"><span style="color:#e8161c">*</span>球半</div>
<div class="t" style="left:837px;top:469px;width:55px;height:40px;line-height:40px;">0.86</div>
<div class="t" style="left:892px;top:469px;width:99px;height:40px;line-height:40px;">10.39</div>
<div class="t" style="left:991px;top:469px;width:77px;height:40px;line-height:40px;">5.32</div>
<div class="t" style="left:1068px;top:469px;width:101px;height:40px;line-height:40px;">1.25</div>
<div class="t" style="left:1169px;top:468px;width:56px;height:40px;line-height:40px;color:#f05555">胜</div>
<div class="t" style="left:1225px;top:468px;width:57px;height:40px;line-height:40px;color:#f05555">赢</div>
<div class="t" style="left:1282px;top:468px;width:85px;height:40px;line-height:40px;color:#f05555">大</div>
<div class="t" style="left:2px;top:509px;width:106px;height:40px;line-height:40px;color:#fff">亚洲预选</div>
<div class="t" style="left:108px;top:510px;width:108px;height:40px;line-height:40px;">24-09-05</div>
<div class="t" style="left:216px;top:509px;width:133px;height:40px;line-height:40px;color:#5a9a60">日本</div>
<div class="t" style="left:349px;top:510px;width:127px;height:40px;line-height:40px;"><span style="color:#e8161c">7-0</span>(2-0)</div>
<div class="t" style="left:476px;top:510px;width:56px;height:40px;line-height:40px;">5-2</div>
<div class="t" style="left:532px;top:509px;width:133px;height:40px;line-height:40px;color:#555">中国</div>
<div class="t" style="left:665px;top:510px;width:55px;height:40px;line-height:40px;">0.96</div>
<div class="t" style="left:720px;top:509px;width:117px;height:40px;line-height:40px;color:#606060">两球半</div>
<div class="t" style="left:837px;top:510px;width:55px;height:40px;line-height:40px;">0.86</div>
<div class="t" style="left:892px;top:510px;width:99px;height:40px;line-height:40px;">1.07</div>
<div class="t" style="left:991px;top:510px;width:77px;height:40px;line-height:40px;">9.60</div>
<div class="t" style="left:1068px;top:510px;width:101px;height:40px;line-height:40px;">24.77</div>
<div class="t" style="left:1169px;top:509px;width:56px;height:40px;line-height:40px;color:#f05555">胜</div>
<div class="t" style="left:1225px;top:509px;width:57px;height:40px;line-height:40px;color:#f05555">赢</div>
<div class="t" style="left:1282px;top:509px;width:85px;height:40px;line-height:40px;color:#f05555">大</div>
<div class="t" style="left:1px;top:83px;width:107px;height:57px;line-height:57px;color:#606060">类型</div>
<div class="t" style="left:108px;top:83px;width:108px;height:57px;line-height:57px;color:#606060">日期</div>
<div class="t" style="left:216px;top:83px;width:133px;height:57px;line-height:57px;color:#606060">主场</div>
<div class="t" style="left:349px;top:83px;width:127px;height:57px;line-height:57px;color:#606060">比分(半场)</div>
<div class="t" style="left:476px;top:83px;width:56px;height:57px;line-height:57px;color:#606060">角球</div>
<div class="t" style="left:532px;top:83px;width:133px;height:57px;line-height:57px;color:#606060">客场</div>
<div class="t" style="left:665px;top:115px;width:55px;height:25px;line-height:25px;color:#606060">主</div>
<div class="t" style="left:720px;top:115px;width:117px;height:25px;line-height:25px;color:#606060">盘口</div>
<div class="t" style="left:837px;top:115px;width:55px;height:25px;line-height:25px;color:#606060">客</div>
<div class="t" style="left:892px;top:115px;width:99px;height:25px;line-height:25px;color:#606060">主</div>
<div class="t" style="left:991px;top:115px;width:77px;height:25px;line-height:25px;color:#606060">和</div>
<div class="t" style="left:1068px;top:115px;width:101px;height:25px;line-height:25px;color:#606060">客</div>
<div class="t" style="left:1169px;top:115px;width:56px;height:25px;line-height:25px;color:#606060">胜负</div>
<div class="t" style="left:1225px;top:115px;width:57px;height:25px;line-height:25px;color:#606060">让球</div>
<div class="t" style="left:1282px;top:115px;width:85px;height:25px;line-height:25px;color:#606060">进球数</div>
<div class="tt" style="left:577px;top:0;height:43px;line-height:43px;font-size:21px;font-weight:bold;color:#fff">近期战绩</div><div class="b" style="left:662px;top:11px;width:17.5px;height:17.5px;border-radius:50%;background:#fff"></div><div class="tt" style="left:686px;top:2px;height:43px;line-height:43px;font-size:18px;color:#fff">竖版</div><div class="b" style="left:730px;top:11px;width:11px;height:11px;border-radius:50%;background:#1565e8;border:3px solid #fff"></div><div class="tt" style="left:754px;top:2px;height:43px;line-height:43px;font-size:18px;color:#fff">横版</div><div class="tt" style="left:34px;top:45px;height:38px;line-height:41px;font-size:18px;color:#333;font-weight:bold">日本</div><div class="tt" style="left:397px;top:45px;height:38px;line-height:40px;font-size:18px;color:#555">近</div><div class="sel" style="left:420px;top:53px;width:52px;height:21px;"><span style="position:absolute;left:7px;top:1px;line-height:21px;font-size:16px;font-family:"Liberation Serif",serif">10</span><svg width="14" height="9" viewBox="0 0 14 9" style="position:absolute;right:6px;top:6px"><path d="M1.3 1.3 L6.7 6.7 L12.1 1.3" fill="none" stroke="#111" stroke-width="2.5"/></svg></div><div class="tt" style="left:480px;top:45px;height:38px;line-height:40px;font-size:18px;color:#555">场</div><div class="cb" style="left:503px;top:56px"></div><div class="tt" style="left:529px;top:45px;height:38px;line-height:40px;font-size:18px;color:#555">同主</div><div class="cb on" style="left:564px;top:56px"><svg width="19" height="19" viewBox="0 0 19 19"><path d="M3.6 10.4 L7.4 14.2 L15.4 4.6" fill="none" stroke="#fff" stroke-width="3"/></svg></div><div class="tt" style="left:584px;top:45px;height:38px;line-height:40px;font-size:18px;color:#555">亚洲预选</div><div class="cb on" style="left:655px;top:56px"><svg width="19" height="19" viewBox="0 0 19 19"><path d="M3.6 10.4 L7.4 14.2 L15.4 4.6" fill="none" stroke="#fff" stroke-width="3"/></svg></div><div class="tt" style="left:675px;top:45px;height:38px;line-height:40px;font-size:18px;color:#555">亚洲杯</div><div class="cb on" style="left:727px;top:56px"><svg width="19" height="19" viewBox="0 0 19 19"><path d="M3.6 10.4 L7.4 14.2 L15.4 4.6" fill="none" stroke="#fff" stroke-width="3"/></svg></div><div class="tt" style="left:747px;top:45px;height:38px;line-height:40px;font-size:18px;color:#555">国际友谊</div><div class="cb on" style="left:818px;top:56px"><svg width="19" height="19" viewBox="0 0 19 19"><path d="M3.6 10.4 L7.4 14.2 L15.4 4.6" fill="none" stroke="#fff" stroke-width="3"/></svg></div><div class="tt" style="left:838px;top:45px;height:38px;line-height:40px;font-size:18px;color:#555">麒麟杯</div><div class="cb on" style="left:892px;top:56px"><svg width="19" height="19" viewBox="0 0 19 19"><path d="M3.6 10.4 L7.4 14.2 L15.4 4.6" fill="none" stroke="#fff" stroke-width="3"/></svg></div><div class="tt" style="left:912px;top:45px;height:38px;line-height:40px;font-size:18px;color:#555">世界杯</div><div class="cb on" style="left:964px;top:56px"><svg width="19" height="19" viewBox="0 0 19 19"><path d="M3.6 10.4 L7.4 14.2 L15.4 4.6" fill="none" stroke="#fff" stroke-width="3"/></svg></div><div class="tt" style="left:984px;top:45px;height:38px;line-height:40px;font-size:18px;color:#555">东亚杯</div><div class="sel" style="left:702px;top:83px;width:87px;height:27px;"><span style="position:absolute;left:7px;top:0px;line-height:27px;font-size:19px;">Crow*</span><svg width="14" height="9" viewBox="0 0 14 9" style="position:absolute;right:6px;top:9px"><path d="M1.3 1.3 L6.7 6.7 L12.1 1.3" fill="none" stroke="#111" stroke-width="2.5"/></svg></div><div class="sel" style="left:802px;top:83px;width:52px;height:27px;"><span style="position:absolute;left:7px;top:0px;line-height:27px;font-size:18px;">终</span><svg width="14" height="9" viewBox="0 0 14 9" style="position:absolute;right:6px;top:9px"><path d="M1.3 1.3 L6.7 6.7 L12.1 1.3" fill="none" stroke="#111" stroke-width="2.5"/></svg></div><div class="sel" style="left:935px;top:83px;width:124px;height:27px;"><span style="position:absolute;left:7px;top:0px;line-height:27px;font-size:18px;">胜平负均值</span><svg width="14" height="9" viewBox="0 0 14 9" style="position:absolute;right:6px;top:9px"><path d="M1.3 1.3 L6.7 6.7 L12.1 1.3" fill="none" stroke="#111" stroke-width="2.5"/></svg></div><div class="sel" style="left:1073px;top:83px;width:52px;height:27px;"><span style="position:absolute;left:7px;top:0px;line-height:27px;font-size:18px;">终</span><svg width="14" height="9" viewBox="0 0 14 9" style="position:absolute;right:6px;top:9px"><path d="M1.3 1.3 L6.7 6.7 L12.1 1.3" fill="none" stroke="#111" stroke-width="2.5"/></svg></div><div class="sel" style="left:1232px;top:83px;width:70px;height:27px;"><span style="position:absolute;left:7px;top:0px;line-height:27px;font-size:18px;">全场</span><svg width="14" height="9" viewBox="0 0 14 9" style="position:absolute;right:6px;top:9px"><path d="M1.3 1.3 L6.7 6.7 L12.1 1.3" fill="none" stroke="#111" stroke-width="2.5"/></svg></div><div class="tt" style="left:440px;top:555px;height:30px;line-height:30px;font-size:18px;color:#555">近</div><div class="tt" style="left:458px;top:555px;height:30px;line-height:30px;font-size:18px;color:#e8161c">10</div><div class="tt" style="left:476px;top:555px;height:30px;line-height:30px;font-size:18px;color:#555">场</div><div class="tt" style="left:495px;top:555px;height:30px;line-height:30px;font-size:18px;color:#555">,</div><div class="tt" style="left:500px;top:555px;height:30px;line-height:30px;font-size:18px;color:#555">胜</div><div class="tt" style="left:518px;top:555px;height:30px;line-height:30px;font-size:18px;color:#333">7</div><div class="tt" style="left:528px;top:555px;height:30px;line-height:30px;font-size:18px;color:#555">平</div><div class="tt" style="left:546px;top:555px;height:30px;line-height:30px;font-size:18px;color:#333">2</div><div class="tt" style="left:557px;top:555px;height:30px;line-height:30px;font-size:18px;color:#555">负</div><div class="tt" style="left:574px;top:555px;height:30px;line-height:30px;font-size:18px;color:#333">1</div><div class="tt" style="left:585px;top:555px;height:30px;line-height:30px;font-size:18px;color:#555">,</div><div class="tt" style="left:595px;top:555px;height:30px;line-height:30px;font-size:18px;color:#555">胜率</div><div class="tt" style="left:632px;top:555px;height:30px;line-height:30px;font-size:18px;color:#555">:</div><div class="b" style="left:638px;top:555px;width:52px;height:28px;background:#fd0000"></div><div class="tt" style="left:646px;top:555px;height:30px;line-height:30px;font-size:18px;color:#fff">70%</div><div class="tt" style="left:696px;top:555px;height:30px;line-height:30px;font-size:18px;color:#555">赢率</div><div class="tt" style="left:732px;top:555px;height:30px;line-height:30px;font-size:18px;color:#555">:</div><div class="tt" style="left:738px;top:555px;height:30px;line-height:30px;font-size:18px;color:#2a2ad0">50%</div><div class="tt" style="left:781px;top:555px;height:30px;line-height:30px;font-size:18px;color:#555">大</div><div class="tt" style="left:800px;top:555px;height:30px;line-height:30px;font-size:18px;color:#555">:</div><div class="tt" style="left:805px;top:555px;height:30px;line-height:30px;font-size:18px;color:#2a2ad0">50%</div><div class="tt" style="left:849px;top:555px;height:30px;line-height:30px;font-size:18px;color:#555">单率</div><div class="tt" style="left:885px;top:555px;height:30px;line-height:30px;font-size:18px;color:#555">:</div><div class="tt" style="left:890px;top:555px;height:30px;line-height:30px;font-size:18px;color:#3c8a3c">30%</div>
</body></html>
